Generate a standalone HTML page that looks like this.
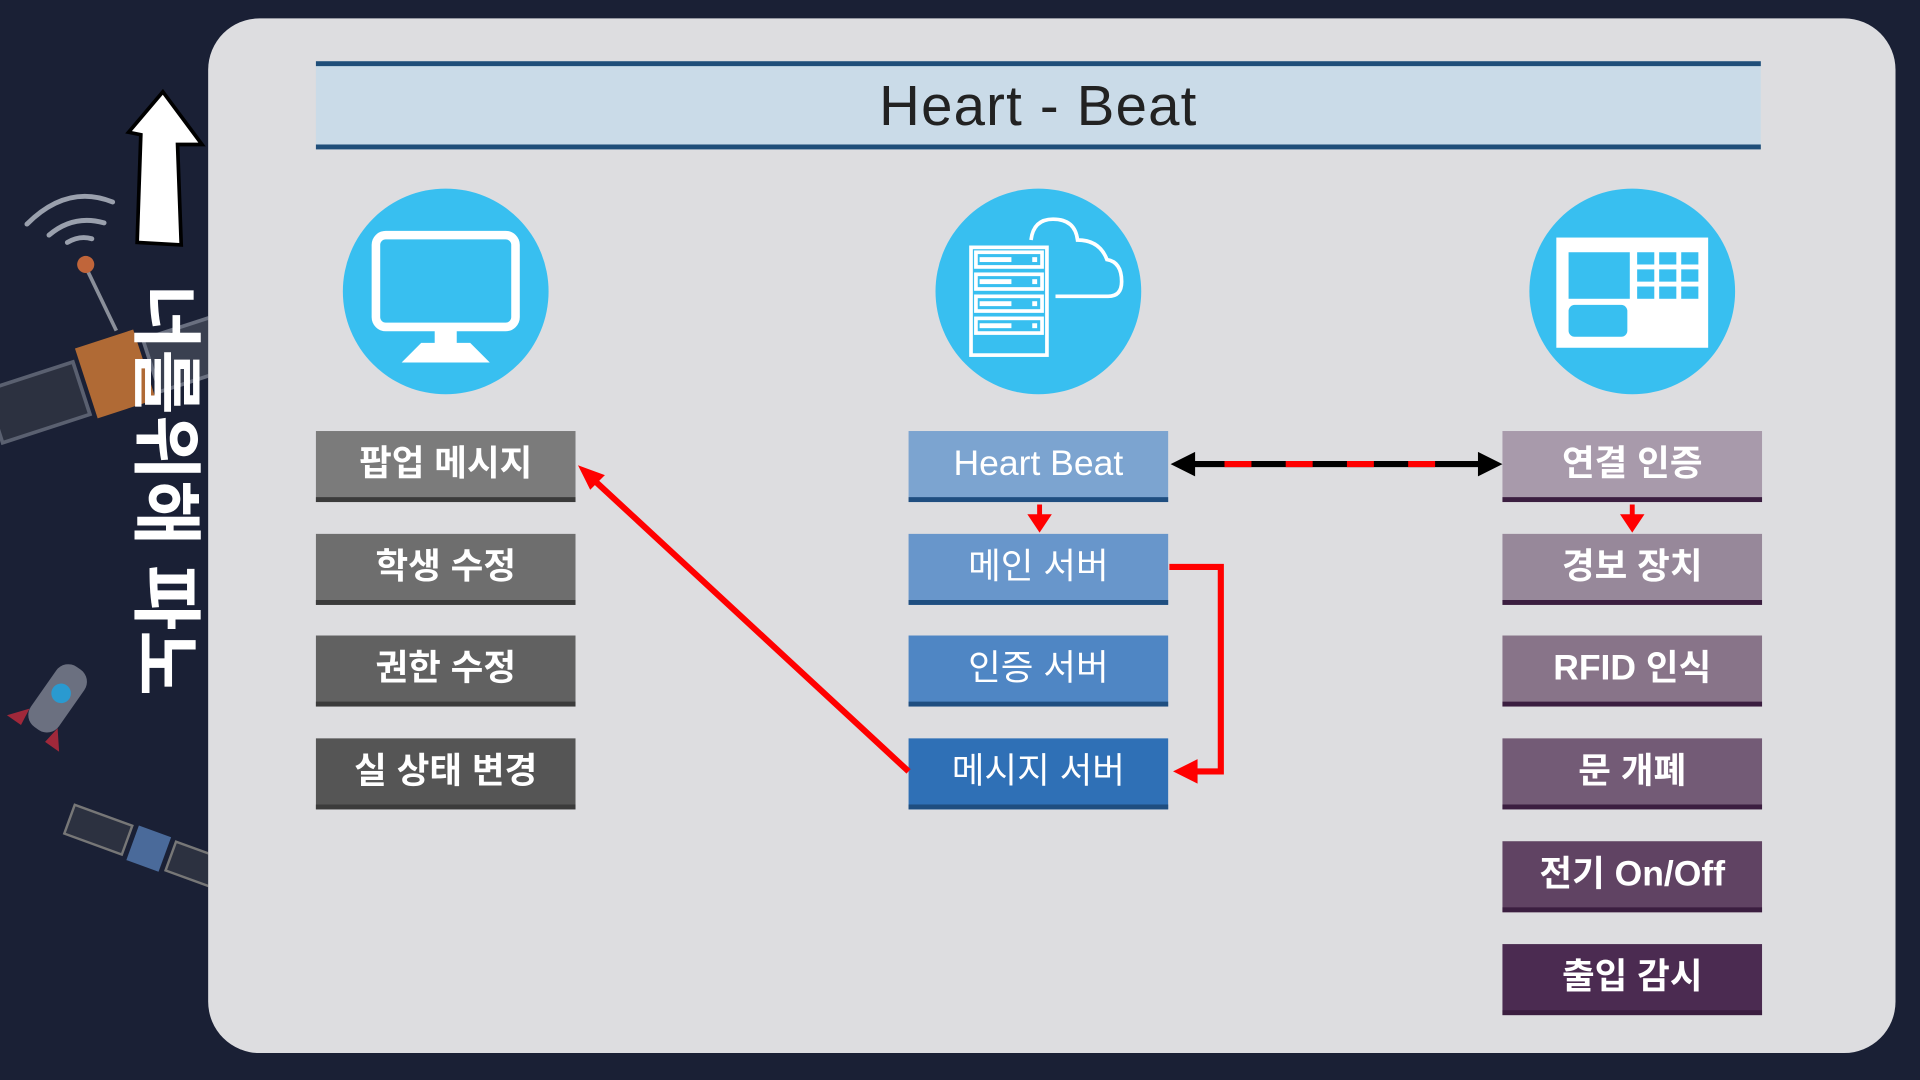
<!DOCTYPE html>
<html><head><meta charset="utf-8"><style>
html,body{margin:0;padding:0;width:1920px;height:1080px;overflow:hidden;background:#1a2035}
#w{position:absolute;left:0;top:0;width:1568px;height:882px;transform:scale(1.22449);transform-origin:0 0;font-family:"Liberation Sans","Noto Sans CJK KR",sans-serif}
.panel{position:absolute;left:170px;top:15px;width:1378px;height:845px;background:#dddde0;border-radius:42px}
.hdr{position:absolute;left:258px;top:50px;width:1180px;height:64px;background:#cadbe8;border-top:4px solid #1f4e79;border-bottom:4px solid #1f4e79;text-align:center;font-size:46px;line-height:64px;color:#222;letter-spacing:1px}
.b{position:absolute;width:212px;height:54px;line-height:54px;text-align:center;color:#fff;font-size:29px;font-weight:bold;border-bottom:4px solid}
.g{left:258px;border-color:#3b3b3b}
.m{left:742px;border-color:#1f4e80;font-weight:normal}
.p{left:1227px;border-color:#3b1e40}
.c{position:absolute;width:168px;height:168px;border-radius:50%;background:#38bff0;top:154px}
</style></head><body><div id="w">
<svg width="170" height="882" style="position:absolute;left:0;top:0">
<g fill="none" stroke="#9aa0ad" stroke-width="4" stroke-linecap="round"><path d="M22 183 Q55 150 92 165"/><path d="M40 192 Q60 175 85 182"/><path d="M55 198 Q65 192 75 195"/></g>
<line x1="70" y1="218" x2="95" y2="270" stroke="#8a8f9a" stroke-width="3"/><circle cx="70" cy="216" r="7" fill="#c0653a"/>
<g transform="rotate(-18 80 310)"><rect x="-10" y="290" width="75" height="45" fill="#2c3140" stroke="#5a6070" stroke-width="3"/><rect x="70" y="280" width="50" height="60" fill="#b06a35"/><rect x="125" y="290" width="75" height="45" fill="#3a4050" stroke="#6a7080" stroke-width="3"/></g>
<g transform="rotate(35 45 575)"><rect x="30" y="540" width="28" height="60" rx="12" fill="#6b7080"/><circle cx="44" cy="565" r="8" fill="#2a9ad0"/><path d="M30 590 l-12 15 l14 0z M58 590 l12 15 l-14 0z" fill="#a0283a"/></g>
<g transform="rotate(20 120 700)"><rect x="50" y="680" width="50" height="25" fill="#2c3140" stroke="#777" stroke-width="2"/><rect x="105" y="678" width="28" height="30" fill="#4a6a9a"/><rect x="138" y="680" width="50" height="25" fill="#2c3140" stroke="#777" stroke-width="2"/></g>
<path d="M133 75 L105 108 L115 110 L112 198 L148 200 L145 118 L165 118 Z" fill="#fff" stroke="#000" stroke-width="3"/>
</svg>
<div style="position:absolute;left:98px;top:232px;width:72px;color:#fff;font-size:58px;font-weight:bold;line-height:72px;writing-mode:vertical-rl;text-orientation:sideways;white-space:nowrap">너를위해 파노</div>
<div class="panel"></div>
<div class="hdr">Heart - Beat</div>
<div class="c" style="left:280px"><svg width="168" height="168"><rect x="27" y="38" width="114" height="75" rx="8" fill="none" stroke="#fff" stroke-width="7"/><rect x="75" y="116" width="18" height="12" fill="#fff"/><path d="M48 142 L64 126 L104 126 L120 142Z" fill="#fff"/></svg></div>
<div class="c" style="left:764px"><svg width="168" height="168" fill="none" stroke="#fff" stroke-width="3"><rect x="29" y="48" width="62" height="88"/><rect x="33" y="52" width="54" height="12"/><rect x="33" y="70" width="54" height="12"/><rect x="33" y="88" width="54" height="12"/><rect x="33" y="106" width="54" height="12"/><g fill="#fff" stroke="none"><rect x="36" y="56" width="26" height="4"/><rect x="36" y="74" width="26" height="4"/><rect x="36" y="92" width="26" height="4"/><rect x="36" y="110" width="26" height="4"/><rect x="79" y="56" width="4" height="4"/><rect x="79" y="74" width="4" height="4"/><rect x="79" y="92" width="4" height="4"/><rect x="79" y="110" width="4" height="4"/></g><path d="M98 88 L141 88 Q152 88 152 76 Q152 60 140 58 Q134 42 116 42 Q114 25 96 25 Q80 25 78 42"/></svg></div>
<div class="c" style="left:1249px"><svg width="168" height="168"><rect x="22" y="40" width="124" height="90" fill="#fff"/><rect x="32" y="52" width="50" height="38" fill="#38bff0"/><rect x="32" y="95" width="48" height="26" rx="5" fill="#38bff0"/><g fill="#38bff0"><rect x="88" y="52" width="14" height="10"/><rect x="106" y="52" width="14" height="10"/><rect x="124" y="52" width="14" height="10"/><rect x="88" y="66" width="14" height="10"/><rect x="106" y="66" width="14" height="10"/><rect x="124" y="66" width="14" height="10"/><rect x="88" y="80" width="14" height="10"/><rect x="106" y="80" width="14" height="10"/><rect x="124" y="80" width="14" height="10"/></g></svg></div>
<div class="b g" style="top:352px;background:#7b7b7b">팝업 메시지</div>
<div class="b g" style="top:436px;background:#6e6e6e">학생 수정</div>
<div class="b g" style="top:519px;background:#616161">권한 수정</div>
<div class="b g" style="top:603px;background:#555">실 상태 변경</div>
<div class="b m" style="top:352px;background:#7ca4d0">Heart Beat</div>
<div class="b m" style="top:436px;background:#6896cb">메인 서버</div>
<div class="b m" style="top:519px;background:#4f86c4">인증 서버</div>
<div class="b m" style="top:603px;background:#2f70b6">메시지 서버</div>
<div class="b p" style="top:352px;background:#a89aab">연결 인증</div>
<div class="b p" style="top:436px;background:#97889a">경보 장치</div>
<div class="b p" style="top:519px;background:#887489">RFID 인식</div>
<div class="b p" style="top:603px;background:#735b76">문 개폐</div>
<div class="b p" style="top:687px;background:#604363">전기 On/Off</div>
<div class="b p" style="top:771px;background:#4b2b51">출입 감시</div>
<svg width="1568" height="882" style="position:absolute;left:0;top:0">
<line x1="972" y1="379" x2="1210" y2="379" stroke="#000" stroke-width="5"/>
<line x1="1000" y1="379" x2="1180" y2="379" stroke="#f00" stroke-width="5" stroke-dasharray="22,28"/>
<path d="M956 379 L976 369 L976 389Z M1227 379 L1207 369 L1207 389Z" fill="#000"/>
<line x1="849" y1="412" x2="849" y2="424" stroke="#f00" stroke-width="4"/><path d="M839 420 L859 420 L849 435Z" fill="#f00"/>
<line x1="1333" y1="412" x2="1333" y2="424" stroke="#f00" stroke-width="4"/><path d="M1323 420 L1343 420 L1333 435Z" fill="#f00"/>
<path d="M955 463 L997 463 L997 630 L975 630" fill="none" stroke="#f00" stroke-width="5"/><path d="M958 630 L978 620 L978 640Z" fill="#f00"/>
<line x1="742" y1="630" x2="485" y2="392" stroke="#f00" stroke-width="5"/><path d="M472 380 L494 388 L482 400Z" fill="#f00"/>
</svg>
</div></body></html>
